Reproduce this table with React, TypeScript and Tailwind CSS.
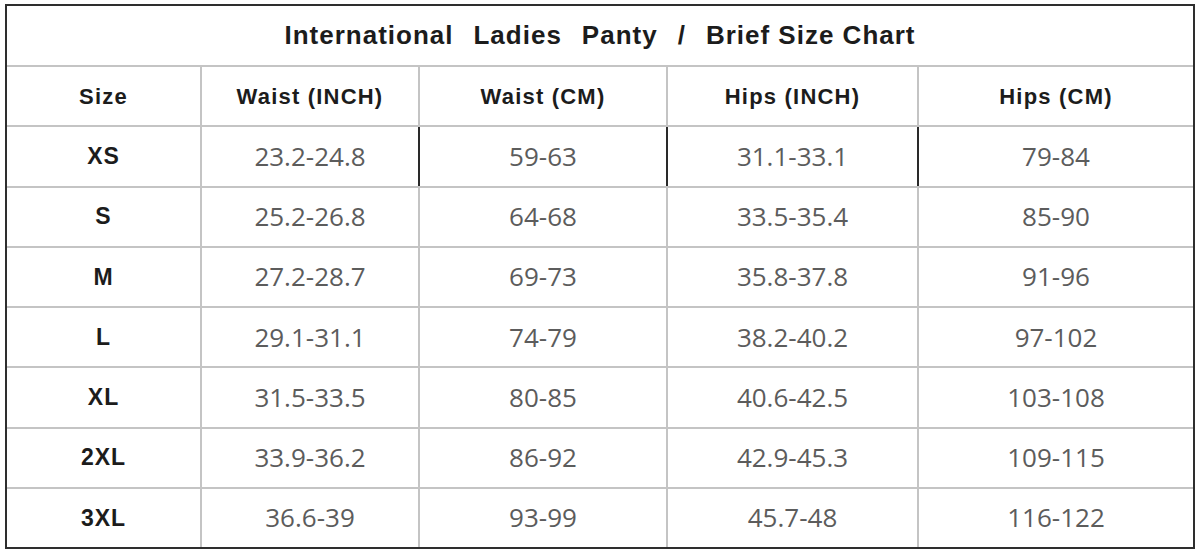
const headers = ['Size', 'Waist (INCH)', 'Waist (CM)', 'Hips (INCH)', 'Hips (CM)'];

const rows = [
  ['XS', '23.2-24.8', '59-63', '31.1-33.1', '79-84'],
  ['S', '25.2-26.8', '64-68', '33.5-35.4', '85-90'],
  ['M', '27.2-28.7', '69-73', '35.8-37.8', '91-96'],
  ['L', '29.1-31.1', '74-79', '38.2-40.2', '97-102'],
  ['XL', '31.5-33.5', '80-85', '40.6-42.5', '103-108'],
  ['2XL', '33.9-36.2', '86-92', '42.9-45.3', '109-115'],
  ['3XL', '36.6-39', '93-99', '45.7-48', '116-122'],
];

const titleWords = ['International', 'Ladies', 'Panty', '/', 'Brief Size Chart'];

const bold = "font-['Liberation_Sans',Arial,sans-serif] font-bold text-[#1c1c1c]";

export default function App() {
  return (
    <div className="w-[1200px] h-[554px] bg-white pt-[4px] pl-[5px]">
      <div className="w-[1190px] border-2 border-[#2e2e2e] bg-[#c4c4c4]">
        <div className="grid grid-cols-[193px_216px_246px_249px_274px] grid-rows-[59px_repeat(8,58.25px)] gap-[2px]">
          <div
            className={`col-span-5 bg-white flex items-center justify-center gap-[20px] text-[26px] tracking-[1px] ${bold}`}
          >
            {titleWords.map((w) => (
              <span key={w}>{w}</span>
            ))}
          </div>

          {headers.map((h) => (
            <div
              key={h}
              className={`bg-white flex items-center justify-center text-[22px] tracking-[1.2px] ${bold}`}
            >
              {h}
            </div>
          ))}

          {rows.map((row, r) =>
            row.map((cell, c) => (
              <div
                key={`${r}-${c}`}
                className={
                  'bg-white flex items-center justify-center ' +
                  (r === 0 && c >= 1 && c <= 3 ? 'shadow-[2px_0_0_#2a2a2a] ' : '') +
                  (c === 0
                    ? `text-[23px] tracking-[1px] ${bold}`
                    : "font-['Open_Sans',sans-serif] text-[26px] text-[#5c5c5c]")
                }
              >
                {cell}
              </div>
            ))
          )}
        </div>
      </div>
    </div>
  );
}
